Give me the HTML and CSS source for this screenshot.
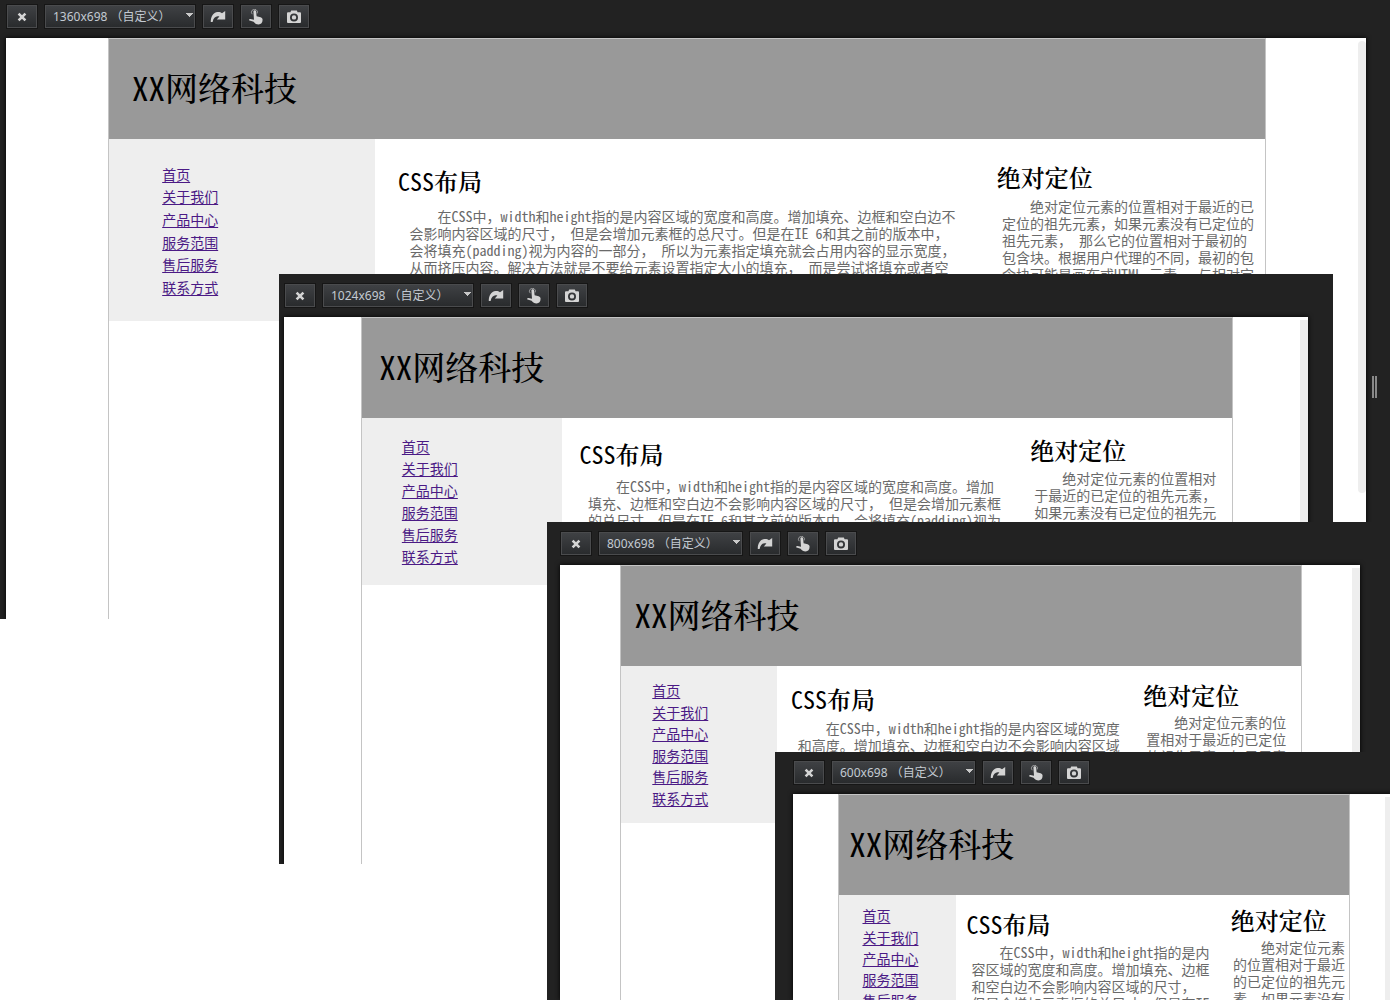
FILE: index.html
```html
<!DOCTYPE html>
<html lang="zh-CN">
<head>
<meta charset="utf-8">
<title>XX网络科技</title>
<meta name="viewport" content="width=device-width, initial-scale=1">
<link rel="stylesheet" href="styles.css">
</head>
<body>
<svg class="sprite" aria-hidden="true">
  <symbol id="icon-close" viewBox="0 0 16 16">
    <path d="M4.6 4.6l6.8 6.8M11.4 4.6l-6.8 6.8" fill="none" stroke="currentColor" stroke-width="2.6"/>
  </symbol>
  <symbol id="icon-rotate" viewBox="0 0 16 16">
    <path d="M0.8 13C0.5 8 3.2 3.4 7.6 3C9.4 2.8 10.8 3.3 12 4.3L15.2 2V10.6H6.8L9.4 7.6C6.6 6.2 3.4 8.2 2.6 13Z" fill="currentColor"/>
  </symbol>
  <symbol id="icon-touch" viewBox="0 0 16 16">
    <path d="M4.2 5.2A3 3 0 1 1 9.2 4.4" fill="none" stroke="currentColor" stroke-width="1" opacity=".6"/>
    <path d="M5.4 2.6C5.4 .8 8 .8 8.1 2.6L8.6 7.2L12.6 8.2C14 8.6 14.6 9.4 14.6 10.8C14.6 13.8 13 15.4 10.6 15.4C8.2 15.4 7.2 14.6 5.6 12.8L1.6 11.6C.6 11.2 1.2 9.8 2.4 10L6 10.8Z" fill="currentColor"/>
  </symbol>
  <symbol id="icon-camera" viewBox="0 0 16 16">
    <path fill-rule="evenodd" d="M2 3.2H4.4L5.2 1.6H10.8L11.6 3.2H14Q15 3.2 15 4.2V13Q15 14 14 14H2Q1 14 1 13V4.2Q1 3.2 2 3.2ZM8 4.4A4 4 0 1 0 8 12.4A4 4 0 1 0 8 4.4ZM8 6.2A2.2 2.2 0 1 1 8 10.6A2.2 2.2 0 1 1 8 6.2Z" fill="currentColor"/>
  </symbol>
</svg>

<main class="desktop">

  <section class="window window-1360" aria-label="1360x698">
    <div class="toolbar">
      <button class="tool" type="button" aria-label="关闭"><svg><use href="#icon-close"/></svg></button>
      <select class="size" aria-label="窗口尺寸"><option>1360x698 （自定义）</option></select>
      <button class="tool" type="button" aria-label="旋转"><svg><use href="#icon-rotate"/></svg></button>
      <button class="tool" type="button" aria-label="触摸"><svg><use href="#icon-touch"/></svg></button>
      <button class="tool" type="button" aria-label="截图"><svg><use href="#icon-camera"/></svg></button>
    </div>
    <div class="viewport">
      <div class="page">
        <header class="banner"><h1><span class="latin">XX</span>网络科技</h1></header>
        <div class="columns">
          <nav class="menu">
            <ul>
              <li><a href="#">首页</a></li>
              <li><a href="#">关于我们</a></li>
              <li><a href="#">产品中心</a></li>
              <li><a href="#">服务范围</a></li>
              <li><a href="#">售后服务</a></li>
              <li><a href="#">联系方式</a></li>
            </ul>
          </nav>
          <article class="content">
            <h2><span class="latin">CSS</span>布局</h2>
            <p>在CSS中，width和height指的是内容区域的宽度和高度。增加填充、边框和空白边不会影响内容区域的尺寸， 但是会增加元素框的总尺寸。但是在IE 6和其之前的版本中，会将填充(padding)视为内容的一部分， 所以为元素指定填充就会占用内容的显示宽度，从而挤压内容。解决方法就是不要给元素设置指定大小的填充， 而是尝试将填充或者空</p>
          </article>
          <aside class="extra">
            <h2>绝对定位</h2>
            <p>绝对定位元素的位置相对于最近的已定位的祖先元素，如果元素没有已定位的祖先元素， 那么它的位置相对于最初的包含块。根据用户代理的不同，最初的包含块可能是画布或HTML 元素。 与相对定</p>
          </aside>
        </div>
      </div>
      <div class="scrollbar"></div>
    </div>
    <div class="grip"></div>
  </section>

  <section class="window window-1024" aria-label="1024x698">
    <div class="toolbar">
      <button class="tool" type="button" aria-label="关闭"><svg><use href="#icon-close"/></svg></button>
      <select class="size" aria-label="窗口尺寸"><option>1024x698 （自定义）</option></select>
      <button class="tool" type="button" aria-label="旋转"><svg><use href="#icon-rotate"/></svg></button>
      <button class="tool" type="button" aria-label="触摸"><svg><use href="#icon-touch"/></svg></button>
      <button class="tool" type="button" aria-label="截图"><svg><use href="#icon-camera"/></svg></button>
    </div>
    <div class="viewport">
      <div class="page">
        <header class="banner"><h1><span class="latin">XX</span>网络科技</h1></header>
        <div class="columns">
          <nav class="menu">
            <ul>
              <li><a href="#">首页</a></li>
              <li><a href="#">关于我们</a></li>
              <li><a href="#">产品中心</a></li>
              <li><a href="#">服务范围</a></li>
              <li><a href="#">售后服务</a></li>
              <li><a href="#">联系方式</a></li>
            </ul>
          </nav>
          <article class="content">
            <h2><span class="latin">CSS</span>布局</h2>
            <p>在CSS中，width和height指的是内容区域的宽度和高度。增加填充、边框和空白边不会影响内容区域的尺寸， 但是会增加元素框的总尺寸。但是在IE 6和其之前的版本中，会将填充(padding)视为</p>
          </article>
          <aside class="extra">
            <h2>绝对定位</h2>
            <p>绝对定位元素的位置相对于最近的已定位的祖先元素，如果元素没有已定位的祖先元</p>
          </aside>
        </div>
      </div>
      <div class="scrollbar"></div>
    </div>
  </section>

  <section class="window window-800" aria-label="800x698">
    <div class="toolbar">
      <button class="tool" type="button" aria-label="关闭"><svg><use href="#icon-close"/></svg></button>
      <select class="size size-short" aria-label="窗口尺寸"><option>800x698 （自定义）</option></select>
      <button class="tool" type="button" aria-label="旋转"><svg><use href="#icon-rotate"/></svg></button>
      <button class="tool" type="button" aria-label="触摸"><svg><use href="#icon-touch"/></svg></button>
      <button class="tool" type="button" aria-label="截图"><svg><use href="#icon-camera"/></svg></button>
    </div>
    <div class="viewport">
      <div class="page">
        <header class="banner"><h1><span class="latin">XX</span>网络科技</h1></header>
        <div class="columns">
          <nav class="menu">
            <ul>
              <li><a href="#">首页</a></li>
              <li><a href="#">关于我们</a></li>
              <li><a href="#">产品中心</a></li>
              <li><a href="#">服务范围</a></li>
              <li><a href="#">售后服务</a></li>
              <li><a href="#">联系方式</a></li>
            </ul>
          </nav>
          <article class="content">
            <h2><span class="latin">CSS</span>布局</h2>
            <p>在CSS中，width和height指的是内容区域的宽度和高度。增加填充、边框和空白边不会影响内容区域</p>
          </article>
          <aside class="extra">
            <h2>绝对定位</h2>
            <p>绝对定位元素的位置相对于最近的已定位的祖先元素，如果元素</p>
          </aside>
        </div>
      </div>
      <div class="scrollbar"></div>
    </div>
  </section>

  <section class="window window-600" aria-label="600x698">
    <div class="toolbar">
      <button class="tool" type="button" aria-label="关闭"><svg><use href="#icon-close"/></svg></button>
      <select class="size size-short" aria-label="窗口尺寸"><option>600x698 （自定义）</option></select>
      <button class="tool" type="button" aria-label="旋转"><svg><use href="#icon-rotate"/></svg></button>
      <button class="tool" type="button" aria-label="触摸"><svg><use href="#icon-touch"/></svg></button>
      <button class="tool" type="button" aria-label="截图"><svg><use href="#icon-camera"/></svg></button>
    </div>
    <div class="viewport">
      <div class="page">
        <header class="banner"><h1><span class="latin">XX</span>网络科技</h1></header>
        <div class="columns">
          <nav class="menu">
            <ul>
              <li><a href="#">首页</a></li>
              <li><a href="#">关于我们</a></li>
              <li><a href="#">产品中心</a></li>
              <li><a href="#">服务范围</a></li>
              <li><a href="#">售后服务</a></li>
            </ul>
          </nav>
          <article class="content">
            <h2><span class="latin">CSS</span>布局</h2>
            <p>在CSS中，width和height指的是内容区域的宽度和高度。增加填充、边框和空白边不会影响内容区域的尺寸， 但是会增加元素框的总尺寸。但是在IE</p>
          </article>
          <aside class="extra">
            <h2>绝对定位</h2>
            <p>绝对定位元素的位置相对于最近的已定位的祖先元素，如果元素没有</p>
          </aside>
        </div>
      </div>
      <div class="scrollbar"></div>
    </div>
  </section>

</main>
</body>
</html>
```
FILE: styles.css
```css
* {
  box-sizing: border-box;
}

body {
  margin: 0;
  background: #fff;
  font-family: "Noto Sans Mono CJK SC", "Noto Sans CJK SC", sans-serif;
  font-size: 14px;
  line-height: 17px;
  text-autospace: no-autospace;
  text-spacing-trim: space-all;
}

h1,
h2,
p,
ul {
  margin: 0;
  padding: 0;
}

.sprite {
  position: absolute;
  width: 0;
  height: 0;
}

/* Desktop with overlapping preview windows */
.desktop {
  position: relative;
  height: 100vh;
  overflow: hidden;
}

.window {
  position: absolute;
  display: flex;
  flex-direction: column;
  background: #222;
}

.window-1360 {
  top: 0;
  left: 0;
  right: 0;
  height: 619px;
  padding: 0 24px 0 6px;
}

.window-1024 {
  top: 274px;
  left: 279px;
  width: 1054px;
  height: 590px;
  padding: 5px 25px 0 5px;
}

.window-800 {
  top: 522px;
  left: 547px;
  right: 0;
  bottom: 0;
  padding: 5px 30px 0 13px;
}

.window-600 {
  top: 752px;
  left: 775px;
  width: 618px;
  bottom: 0;
  padding: 4px 0 0 18px;
}

/* Toolbar */
.toolbar {
  display: flex;
  gap: 8px;
  height: 38px;
  flex: none;
  padding: 5px 1px 10px;
}

.tool,
.size {
  margin: 0;
  height: 23px;
  border: 1px solid #4a4b4d;
  border-radius: 0;
  outline: 1px solid #161616;
  background-color: #2f3134;
  background-image: linear-gradient(#3f4144, #292b2d);
  color: #d4d4d4;
}

.tool {
  display: flex;
  align-items: center;
  justify-content: center;
  width: 30px;
  padding: 0;
}

.tool svg {
  width: 16px;
  height: 16px;
}

.size {
  appearance: none;
  width: 150px;
  padding: 0 7px;
  font-family: "Noto Sans", "Noto Sans CJK SC", sans-serif;
  font-size: 12px;
  color: #c3cad2;
  background-image:
    linear-gradient(to bottom right, #c8c8c8 50%, transparent 51%),
    linear-gradient(to bottom left, #c8c8c8 50%, transparent 51%),
    linear-gradient(#3f4144, #292b2d);
  background-repeat: no-repeat;
  background-position: right 1px top 7px, right 4px top 7px, 0 0;
  background-size: 4px 4px, 4px 4px, 100% 100%;
}

.size-short {
  width: 143px;
}

/* Previewed page */
.viewport {
  position: relative;
  flex: 1;
  min-height: 0;
  overflow: hidden;
  background: #fff;
  box-shadow: 0 0 5px #000;
  clip-path: inset(-6px -6px 0 -6px);
}

.page {
  box-sizing: content-box;
  width: 85%;
  height: 100%;
  margin-left: 7.5%;
  border: 1px solid #c4c4c4;
  border-bottom: 0;
}

.scrollbar {
  position: absolute;
  top: 3px;
  right: 0;
  width: 8px;
  height: 100%;
  background: #eee;
}

.window-1360 .scrollbar {
  height: 452px;
  border-radius: 4px;
}

.grip {
  position: absolute;
  top: 376px;
  right: 13px;
  width: 5px;
  height: 22px;
  border: solid #888;
  border-width: 0 2px;
}

.banner {
  display: flex;
  align-items: center;
  height: 100px;
  padding: 0 0 4px 2%;
  background: #999;
}

h1 {
  font-family: "Noto Serif CJK SC", "Noto Sans Mono CJK SC", "Noto Sans CJK SC", serif;
  font-size: 33px;
  font-weight: 500;
  line-height: 40px;
  color: #000;
}

.latin {
  font-family: "Noto Sans Mono CJK SC", "Liberation Mono", monospace;
  font-weight: 400;
}

.columns {
  display: flex;
  align-items: flex-start;
}

.menu {
  width: 23%;
  padding: 2% 0;
  background: #eee;
}

.menu ul {
  list-style: none;
}

.menu li {
  margin-bottom: 2px;
  padding: 1% 0 0 20%;
  line-height: 18px;
}

.menu a {
  color: #4b1a85;
  text-underline-offset: 2px;
}

.content {
  width: 50%;
  margin-left: 2%;
  padding-top: 2%;
}

.extra {
  width: 23%;
  margin-left: 1.8%;
  padding-top: 2%;
}

h2 {
  padding: 5px 0 1px;
  font-family: "Noto Serif CJK SC", "Noto Sans Mono CJK SC", "Noto Sans CJK SC", serif;
  font-size: 24px;
  font-weight: 600;
  line-height: 28px;
  color: #000;
}

.extra h2 {
  padding: 1px 0 2px;
}

p {
  padding: 2%;
  color: #6a6a6a;
  text-indent: 2em;
}

.content p {
  padding-right: 3%;
}
```
